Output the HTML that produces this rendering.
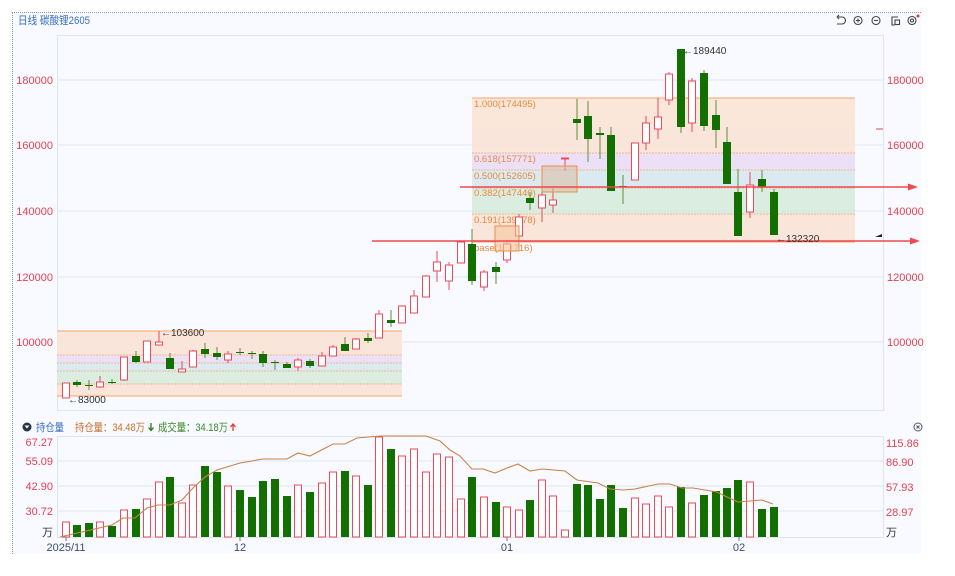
<!DOCTYPE html>
<html><head><meta charset="utf-8">
<style>
html,body{margin:0;padding:0;background:#fff;width:955px;height:576px;overflow:hidden;font-family:"Liberation Sans","Noto Sans CJK SC",sans-serif}
#p{position:absolute;left:12px;top:12px;width:908px;height:541px;background:#f8faff;border-top:1px dotted #8a97aa;border-left:1px dotted #8a97aa}
svg{position:absolute;left:0;top:0}
</style></head><body>
<div id="p"></div>
<svg id="s" width="955" height="576" xmlns="http://www.w3.org/2000/svg" font-family="Liberation Sans, Noto Sans CJK SC, sans-serif">
<text x="18" y="24" font-size="11" fill="#3a6fc4" textLength="72" lengthAdjust="spacingAndGlyphs">日线 碳酸锂2605</text>
<!-- top icons -->
<g stroke="#444" fill="none" stroke-width="1.1">
<path d="M837 17 L842 17 A3.5 3.5 0 1 1 842 24 L837 24"/><path d="M837 17 l2 -2 M837 17 l2 2"/>
<circle cx="858" cy="20.5" r="4"/><path d="M856 20.5h4M858 18.5v4"/>
<circle cx="876" cy="20.5" r="4"/><path d="M874 20.5h4"/>
<path d="M898 17h-6v8h3"/><rect x="895" y="20" width="4.5" height="4.5"/>
<circle cx="912" cy="20.5" r="4"/><circle cx="912" cy="20.5" r="1.5"/>
</g>
<circle cx="918" cy="16" r="1.5" fill="#e33"/>
<!-- main plot -->
<rect x="57.5" y="35.5" width="826" height="375" fill="none" stroke="#dbe5f3"/>
<g stroke="#dde8f5"><path d="M57 80H883M57 145H883M57 211H883M57 277H883M57 342H883"/></g>
<g font-size="11" fill="#e6414f">
<text x="53" y="84" text-anchor="end">180000</text><text x="53" y="149" text-anchor="end">160000</text><text x="53" y="215" text-anchor="end">140000</text><text x="53" y="281" text-anchor="end">120000</text><text x="53" y="346" text-anchor="end">100000</text>
<text x="887" y="84">180000</text><text x="887" y="149">160000</text><text x="887" y="215">140000</text><text x="887" y="281">120000</text><text x="887" y="346">100000</text>
</g>
<!-- fib left -->
<g opacity="0.85">
<rect x="57" y="331" width="345" height="24" fill="#fbe2d4"/><rect x="57" y="355" width="345" height="8" fill="#ebdcf6"/><rect x="57" y="363" width="345" height="8" fill="#d6e8ee"/><rect x="57" y="371" width="345" height="13" fill="#d7eadb"/><rect x="57" y="384" width="345" height="12" fill="#fbe2d4"/>
</g>
<g stroke="#f2a76a" stroke-width="1"><path d="M57 331H402M57 396H402"/></g>
<g stroke="#f2b88a" stroke-dasharray="2 1"><path d="M57 355H402M57 363H402M57 371H402M57 384H402"/></g>
<!-- fib right -->
<g opacity="0.85">
<rect x="472" y="98" width="383" height="55" fill="#fbe2d4"/><rect x="472" y="153" width="383" height="17" fill="#ebdcf6"/><rect x="472" y="170" width="383" height="18" fill="#d6e8ee"/><rect x="472" y="188" width="383" height="26" fill="#d7eadb"/><rect x="472" y="214" width="383" height="28" fill="#fbe2d4"/>
</g>
<g stroke="#f2a76a"><path d="M472 98H855M472 242H855"/></g>
<g stroke="#f2b88a" stroke-dasharray="2 1"><path d="M472 153H855M472 170H855M472 188H855M472 214H855"/></g>
<g font-size="9.5" fill="#e88a3c">
<text x="474" y="107">1.000(174495)</text><text x="474" y="162">0.618(157771)</text><text x="474" y="179">0.500(152605)</text><text x="474" y="196">0.382(147440)</text><text x="474" y="223">0.191(139078)</text><text x="474" y="251">base(131716)</text>
</g>
<g id="cd"></g>
<rect x="542" y="166" width="35" height="26" fill="#d9b9a2" fill-opacity="0.55" stroke="#e8904a"/>
<rect x="495" y="226" width="24" height="25" fill="#f7c49c" fill-opacity="0.6" stroke="#e8904a"/>
<!-- red arrows -->
<g stroke="#f0494f" stroke-width="1.6" fill="#f0494f">
<path d="M460 187H910"/><path d="M918 187l-10 -3.5v7z" stroke="none"/>
<path d="M372 241H912"/><path d="M920 241l-10 -3.5v7z" stroke="none"/>
</g>
<path d="M876 129h7" stroke="#e6414f"/>
<path d="M875 237l7 -3v3z" fill="#222"/>
<g font-size="10" fill="#333">
<text x="161" y="336">←103600</text><text x="68" y="403">←83000</text><text x="683" y="54">←189440</text><text x="776" y="242">←132320</text>
</g>
<!-- volume -->
<circle cx="27" cy="427" r="4.5" fill="#2b3447"/><path d="M24.5 425.5h5l-2.5 3z" fill="#fff"/>
<text x="36" y="431" font-size="11" fill="#3a6fc4" textLength="28" lengthAdjust="spacingAndGlyphs">持仓量</text>
<text x="75" y="431" font-size="11" fill="#c8702a" textLength="70" lengthAdjust="spacingAndGlyphs">持仓量：34.48万</text>
<path d="M151 423v7M148.5 427.5l2.5 3l2.5 -3" stroke="#2a7a1a" stroke-width="1.3" fill="none"/>
<text x="158" y="431" font-size="11" fill="#3a8a2a" textLength="70" lengthAdjust="spacingAndGlyphs">成交量：34.18万</text>
<path d="M233 431v-7M230.5 427l2.5 -3l2.5 3" stroke="#e33" stroke-width="1.3" fill="none"/>
<circle cx="918" cy="427" r="4" fill="none" stroke="#556"/><path d="M916.5 425.5l3 3M919.5 425.5l-3 3" stroke="#556"/>
<rect x="57.5" y="436.5" width="826" height="101" fill="none" stroke="#dbe5f3"/>
<g stroke="#dde8f5"><path d="M57 461H883M57 486H883M57 511H883"/></g>
<g font-size="11" fill="#e6414f">
<text x="53" y="446" text-anchor="end">67.27</text><text x="53" y="465" text-anchor="end">55.09</text><text x="53" y="490" text-anchor="end">42.90</text><text x="53" y="515" text-anchor="end">30.72</text>
<text x="886" y="447">115.86</text><text x="886" y="466">86.90</text><text x="886" y="491">57.93</text><text x="886" y="516">28.97</text>
</g>
<text x="53" y="536" text-anchor="end" font-size="11" fill="#333">万</text><text x="886" y="536" font-size="11" fill="#333">万</text>
<g id="vb"></g>
<polyline fill="none" stroke="#c8834a" stroke-width="1.1" points="60,537 112,525 123,518 135,518 147,508 158,505 170,505 182,500 193,488 205,477 217,470 240,463 263,459 287,459 298,453 310,456 333,444 345,444 357,438 380,436 426,436 440,441 450,450 460,456 472,469 483,469 495,473 507,468 518,464 530,471 542,469 565,471 577,480 598,483 610,489 623,490 635,489 658,484 670,484 682,488 693,488 705,490 717,492 727,497 738,502 750,501 762,500 773,504"/>
<g stroke="#778" ><path d="M66 537v4M240 537v4M507 537v4M739 537v4"/></g>
<g font-size="11" fill="#3a4a66" text-anchor="middle">
<text x="66" y="551">2025/11</text><text x="240" y="551">12</text><text x="507" y="551">01</text><text x="739" y="551">02</text>
</g>
</svg>
<script>
var C=[[66,383,398,383,398,1],[77,382,385,380,387,0],[89,385,386,380,390,0],[100,382,387,376,388,1],[112,382,383,379,384,0],[124,357,380,357,381,1],[136,356,362,351,363,0],[147,341,362,341,362,1],[159,342,345,331,345,1],[170,358,369,353,369,0],[182,369,372,361,372,1],[193,351,367,350,367,1],[205,349,354,343,358,0],[217,353,357,347,360,0],[228,354,360,351,363,1],[240,352,353,348,355,0],[252,353,354,351,359,0],[263,354,363,351,367,0],[275,362,363,360,370,0],[287,364,368,362,368,0],[298,360,367,358,371,1],[310,361,366,359,368,0],[322,356,366,352,366,1],[333,347,356,345,356,1],[345,344,351,337,351,0],[356,339,349,338,349,1],[368,338,341,333,343,0],[379,314,338,310,338,1],[391,320,323,310,327,0],[402,306,323,305,323,1],[414,296,313,290,313,1],[426,276,297,275,297,1],[437,262,271,251,282,1],[449,265,281,262,290,1],[461,242,263,241,263,1],[472,244,281,229,285,0],[484,272,287,270,291,1],[496,267,272,262,284,0],[507,244,260,240,263,1],[519,217,236,214,236,1],[530,198,203,192,210,0],[542,195,208,192,222,1],[553,200,205,188,213,1],[565,158,159,158,171,1],[577,119,123,99,140,0],[588,116,139,101,162,0],[600,133,135,127,159,0],[611,135,191,127,191,0],[623,186,187,175,204,0],[635,143,180,143,180,1],[646,123,143,116,150,1],[658,117,129,98,139,1],[669,74,100,72,105,1],[681,49,127,49,133,0],[692,81,123,78,132,1],[704,73,126,70,131,0],[716,115,130,100,148,0],[727,142,184,127,184,0],[738,192,236,169,236,0],[750,185,212,172,218,1],[762,179,187,170,192,0],[774,192,235,189,235,0]];
var V=[522,525,523,522,526,510,509,499,482,477,503,485,466,472,486,490,497,481,479,496,485,492,483,472,471,476,485,437,449,456,449,472,454,457,499,477,497,502,507,510,500,480,496,530,484,485,499,485,508,498,504,496,507,487,503,495,491,488,480,482,509,507];
var s='',v='';
C.forEach(function(c,i){var up=c[5],col=up?'#ec4a58':'#136f00',wc=up?'#ec4a58':'#5f8f3a';
s+='<line x1="'+c[0]+'" x2="'+c[0]+'" y1="'+c[3]+'" y2="'+c[4]+'" stroke="'+wc+'"/>';
var h=Math.max(1,c[2]-c[1]);
if(up)s+='<rect x="'+(c[0]-3.5)+'" y="'+c[1]+'" width="7" height="'+h+'" fill="#fff" stroke="'+col+'" stroke-width="1"/>';
else s+='<rect x="'+(c[0]-4)+'" y="'+c[1]+'" width="8" height="'+h+'" fill="'+col+'"/>';
var t=V[i];
if(up)v+='<rect x="'+(c[0]-3.5)+'" y="'+t+'" width="7" height="'+(537-t)+'" fill="#fff" stroke="#ec4a58"/>';
else v+='<rect x="'+(c[0]-4)+'" y="'+t+'" width="8" height="'+(537-t)+'" fill="#136f00"/>';
});
document.getElementById('cd').innerHTML=s;document.getElementById('vb').innerHTML=v;
</script>
</body></html>
